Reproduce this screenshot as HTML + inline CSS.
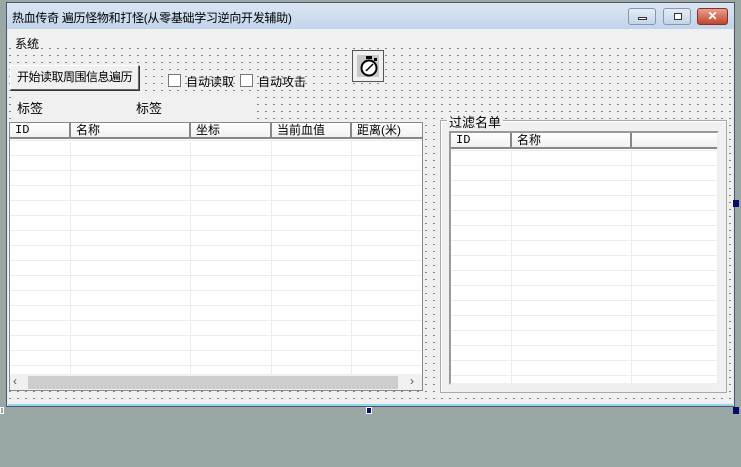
<!DOCTYPE html><html><head><meta charset="utf-8"><style>
*{margin:0;padding:0;box-sizing:border-box}
body{width:741px;height:467px;background:#99a8a5;position:relative;overflow:hidden;font-family:"Liberation Sans","Noto Sans CJK SC",sans-serif;font-size:12px;color:#000}
.a{position:absolute;white-space:nowrap}
#win{left:6px;top:2px;width:729px;height:405px;background:#dfe8f0;border:1px solid #556;}
#title{left:7px;top:3px;width:727px;height:26px;background:linear-gradient(#dbe6f3,#c2d4ea);}
#client{left:8px;top:29px;width:725px;height:375px;background-color:#f0f0f0;background-image:radial-gradient(circle,#222 0.5px,transparent 0.8px);background-size:8px 7px;background-position:-2px 2px}
.btnw{top:8px;width:28px;height:17px;border:1px solid #8297b5;border-radius:3px;background:linear-gradient(#e4edf7,#c4d4e8)}
.lv{background:#fff;border:1px solid #888;overflow:hidden}
.hd{position:absolute;top:0;height:16px;background:linear-gradient(#fff,#f0f0f0);border-right:2px solid #888;border-bottom:2px solid #888;padding-left:5px;font-size:12px;line-height:15px}
.rows{position:absolute;left:0;right:0;top:17px;bottom:0;background-image:linear-gradient(#ececec 1px,transparent 1px);background-size:100% 15px}
.vl{position:absolute;top:17px;bottom:0;width:1px;background:#ececec}
</style></head><body>
<div class="a" id="win"></div>
<div class="a" id="title"></div>
<div class="a" style="left:12px;top:9px;font-size:12px;letter-spacing:-0.3px">热血传奇 遍历怪物和打怪(从零基础学习逆向开发辅助)</div>
<div class="a btnw" style="left:628px"><div class="a" style="left:9px;top:8px;width:9px;height:3px;border:1px solid #333;background:#fff"></div></div>
<div class="a btnw" style="left:663px"><div class="a" style="left:10px;top:4px;width:8px;height:7px;border:1px solid #333;background:#fff"></div></div>
<div class="a btnw" style="left:697px;width:31px;background:linear-gradient(#e8a090,#c0452e);border-color:#8a3020;color:#fff;text-align:center;font-weight:bold;line-height:15px">✕</div>
<div class="a" id="client"></div>
<div class="a" style="left:8px;top:29px;width:725px;height:19px;background:#f0f0f0"></div>
<div class="a" style="left:15px;top:35px">系统</div>
<div class="a" style="left:10px;top:65px;width:129px;height:25px;background:#f0f0f0;border:1px solid #fff;border-right-color:#666;border-bottom-color:#666;box-shadow:1px 1px 0 #333;text-align:center;line-height:22px;font-size:12px;letter-spacing:-0.5px">开始读取周围信息遍历</div>
<div class="a" style="left:168px;top:74px;width:13px;height:13px;background:#fff;border:1px solid #777"></div>
<div class="a" style="left:186px;top:73px;font-size:12px">自动读取</div>
<div class="a" style="left:240px;top:74px;width:13px;height:13px;background:#fff;border:1px solid #777"></div>
<div class="a" style="left:258px;top:73px;font-size:12px">自动攻击</div>
<div class="a" style="left:352px;top:50px;width:32px;height:32px;border:1px solid #555;background:#f0f0f0"><div class="a" style="left:4px;top:4px;width:22px;height:22px;background:#c8c8c8"></div>
<svg class="a" style="left:5px;top:4px" width="22" height="22" viewBox="0 0 22 22"><rect x="8" y="1" width="6" height="3" fill="#000"/><circle cx="11" cy="13" r="7.5" fill="#fff" stroke="#000" stroke-width="2"/><path d="M11 13 L15 9 M11 13 L8 16" stroke="#000" stroke-width="1.5"/><rect x="16" y="3" width="3" height="3" fill="#000"/></svg></div>
<div class="a" style="left:17px;top:93px;width:238px;height:28px;background:#f0f0f0"></div>
<div class="a" style="left:17px;top:98px;font-size:13px">标签</div>
<div class="a" style="left:136px;top:98px;font-size:13px">标签</div>
<div class="a lv" style="left:9px;top:122px;width:414px;height:269px">
<div class="rows"></div>
<div class="vl" style="left:60px"></div><div class="vl" style="left:180px"></div><div class="vl" style="left:261px"></div><div class="vl" style="left:341px"></div>
<div class="hd" style="left:0;width:61px;font-family:'Liberation Mono',monospace">ID</div>
<div class="hd" style="left:61px;width:120px">名称</div>
<div class="hd" style="left:181px;width:81px">坐标</div>
<div class="hd" style="left:262px;width:80px">当前血值</div>
<div class="hd" style="left:342px;width:72px">距离(米)</div>
<div class="a" style="left:0;top:251px;width:412px;height:17px;background:#f0f0f0"><div class="a" style="left:18px;top:2px;width:370px;height:13px;background:#cdcdcd"></div><div class="a" style="left:3px;top:0;color:#555">‹</div><div class="a" style="left:400px;top:0;color:#555">›</div></div>
</div>
<div class="a" style="left:440px;top:120px;width:287px;height:273px;border:1px solid #aaa;box-shadow:inset 1px 1px 0 #fff;background:#f0f0f0"></div>
<div class="a" style="left:447px;top:112px;background:#f0f0f0;padding:0 2px;font-size:13px">过滤名单</div>
<div class="a lv" style="left:449px;top:131px;width:270px;height:254px;border:2px solid #999;border-right-color:#eee;border-bottom-color:#eee">
<div class="rows"></div>
<div class="vl" style="left:60px"></div><div class="vl" style="left:180px"></div>
<div class="hd" style="left:0;width:61px;font-family:'Liberation Mono',monospace">ID</div>
<div class="hd" style="left:61px;width:120px">名称</div>
<div class="hd" style="left:181px;width:90px"></div>
</div>
<div class="a" style="left:8px;top:404px;width:725px;height:2px;background:#8fd6ef"></div>
<div class="a" style="left:366px;top:407px;width:6px;height:7px;background:#0a0a6a;border:1px solid #fff"></div>
<div class="a" style="left:733px;top:200px;width:6px;height:7px;background:#0a0a6a"></div>
<div class="a" style="left:733px;top:407px;width:6px;height:7px;background:#0a0a6a"></div>
<div class="a" style="left:0;top:407px;width:4px;height:7px;border:1px solid #fff"></div>
</body></html>
